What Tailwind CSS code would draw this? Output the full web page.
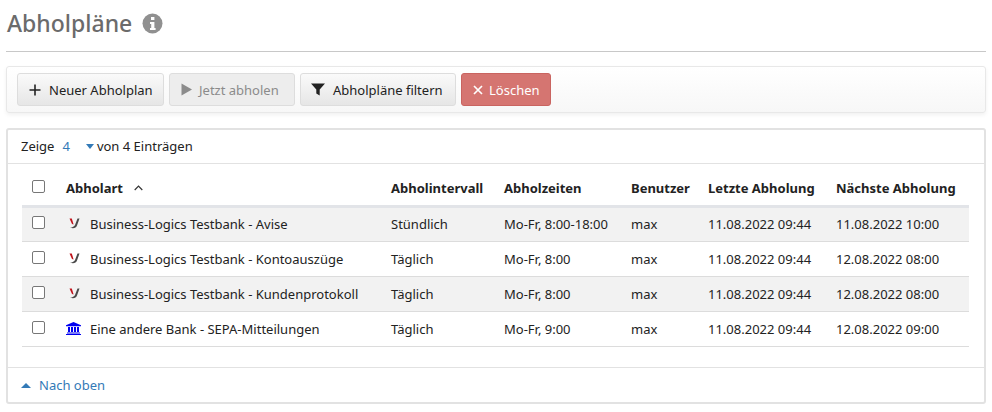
<!DOCTYPE html>
<html lang="de">
<head>
    <meta charset="UTF-8">
    <title>Abholpläne</title>
    <script src="https://cdn.jsdelivr.net/npm/@tailwindcss/browser@4"></script>
</head>
<body class="bg-white font-['Noto_Sans',sans-serif] text-[13px] text-[#222] h-[412px] overflow-hidden">
    <div class="px-[6px] pt-[6px]">
        <!-- Title -->
        <div class="flex items-center h-[46px] border-b border-[#c8c8c8] pl-px pb-[11px]">
            <h1 class="text-[23px] font-medium text-[#6b6b6b] leading-none">Abholpläne</h1>
            <svg class="ml-[10px] w-[21px] h-[21px]" viewBox="0 0 21 21">
                <circle cx="10.5" cy="10.5" r="10" fill="#909090"/>
                <rect x="9" y="4" width="3.4" height="3" fill="#fff"/>
                <path d="M8 9h4.4v6h1.2v2H8v-2h1.2v-4H8z" fill="#fff"/>
            </svg>
        </div>

        <!-- Toolbar -->
        <div class="mt-[14px] h-[47px] flex items-center gap-[5px] pl-[10px] border border-[#e8e8e8] rounded-[3px] bg-gradient-to-b from-white to-[#f7f7f7] shadow-[0_2px_4px_rgba(0,0,0,0.06)]">
            <button class="h-[33px] w-[147px] flex items-center pl-[11px] pt-[2px] rounded-[3px] border border-[#dddddd] bg-gradient-to-b from-[#fafafa] to-[#e6e6e6] text-[#222]">
                <svg class="w-[12px] h-[12px] mr-[8px] -mt-[2px]" viewBox="0 0 12 12"><path d="M6 0.5v11M0.5 6h11" stroke="#222" stroke-width="1.6" fill="none"/></svg>
                Neuer Abholplan
            </button>
            <button class="h-[33px] w-[126px] flex items-center pl-[11px] pt-[2px] rounded-[3px] border border-[#dddddd] bg-[#ededed] text-[#8b8b8b]">
                <svg class="w-[11px] h-[13px] mr-[7px] -mt-[2px]" viewBox="0 0 11 13"><path d="M0.5 0.5L11 6.5L0.5 12.5z" fill="#8b8b8b"/></svg>
                Jetzt abholen
            </button>
            <button class="h-[33px] w-[156px] flex items-center pl-[10px] pt-[2px] rounded-[3px] border border-[#dddddd] bg-gradient-to-b from-[#fafafa] to-[#e6e6e6] text-[#222]">
                <svg class="w-[14px] h-[13px] mr-[8px] -mt-[2px]" viewBox="0 0 14 13"><path d="M0 0.5h14L8.7 6.5v6L5.3 10.5v-4z" fill="#222"/></svg>
                Abholpläne filtern
            </button>
            <button class="h-[33px] w-[90px] flex items-center pl-[11px] pt-[2px] rounded-[3px] border border-[#c96460] bg-[#d57571] text-white">
                <svg class="w-[10px] h-[10px] mr-[6px] -mt-[2px]" viewBox="0 0 10 10"><path d="M1 1l8 8M9 1l-8 8" stroke="#fff" stroke-width="1.7" fill="none"/></svg>
                Löschen
            </button>
        </div>

        <!-- Panel -->
        <div class="mt-[15px] h-[276px] border-2 border-[#e2e2e2] rounded-[3px] flex flex-col">
            <div class="h-[34px] flex items-center pl-[13px] border-b border-[#e2e2e2] shrink-0">
                <span>Zeige</span>
                <span class="ml-[8px] text-[#337ab7]">4</span>
                <span class="ml-[16px] mr-[3px] w-0 h-0 border-x-[4px] border-x-transparent border-t-[5px] border-t-[#337ab7]"></span>
                <span>von 4 Einträgen</span>
            </div>
            <div class="flex-1 px-[14px]">
                <table class="table-fixed w-[947px] border-collapse">
                    <colgroup>
                        <col class="w-[34px]"><col class="w-[325px]"><col class="w-[114px]"><col class="w-[126px]"><col class="w-[77px]"><col class="w-[129px]"><col class="w-[142px]">
                    </colgroup>
                    <thead>
                        <tr class="h-[42px] border-b-[3px] border-[#e2e4e8] text-left font-bold">
                            <th class="pl-[10px]"><span class="block w-[13px] h-[13px] border border-[#777] rounded-[2px] bg-white mt-[4px]"></span></th>
                            <th class="pl-[10px] pt-[8px]">
                                <span class="flex items-center">Abholart
                                    <svg class="ml-[11px] w-[9px] h-[6px]" viewBox="0 0 9 6"><path d="M0.7 5L4.5 1.2L8.3 5" stroke="#333" stroke-width="1.2" fill="none"/></svg>
                                </span>
                            </th>
                            <th class="pl-[10px] pt-[8px]">Abholintervall</th>
                            <th class="pl-[9px] pt-[8px]">Abholzeiten</th>
                            <th class="pl-[10px] pt-[8px]">Benutzer</th>
                            <th class="pl-[10px] pt-[8px]">Letzte Abholung</th>
                            <th class="pl-[9px] pt-[8px]">Nächste Abholung</th>
                        </tr>
                    </thead>
                    <tbody>
                        <tr class="h-[35px] bg-[#f2f2f2] border-b border-[#dcdcdc]">
                            <td class="pl-[10px]"><span class="block w-[13px] h-[13px] border border-[#777] rounded-[2px] bg-white -mt-[3px]"></span></td>
                            <td class="pl-[12px] pt-[2px]">
                                <span class="flex items-center">
                                    <svg class="w-[12px] h-[12px] mr-[10px] -mt-[2px]" viewBox="0 0 12 12"><path d="M1.5 0.5L3.8 0.5L5.6 6.5L4 6z" fill="#c0141c"/><path d="M11.5 0.5L9.5 0.5L7 7C6.3 8.5 4.5 9.6 2 9.6C5.5 11.2 8 10 9 7.5z" fill="#4a4a4a"/></svg>
                                    Business-Logics Testbank - Avise
                                </span>
                            </td>
                            <td class="pl-[10px] pt-[2px]">Stündlich</td>
                            <td class="pl-[9px] pt-[2px]">Mo-Fr, 8:00-18:00</td>
                            <td class="pl-[10px] pt-[2px]">max</td>
                            <td class="pl-[10px] pt-[2px]">11.08.2022 09:44</td>
                            <td class="pl-[9px] pt-[2px]">11.08.2022 10:00</td>
                        </tr>
                        <tr class="h-[35px] border-b border-[#dcdcdc]">
                            <td class="pl-[10px]"><span class="block w-[13px] h-[13px] border border-[#777] rounded-[2px] bg-white -mt-[3px]"></span></td>
                            <td class="pl-[12px] pt-[2px]">
                                <span class="flex items-center">
                                    <svg class="w-[12px] h-[12px] mr-[10px] -mt-[2px]" viewBox="0 0 12 12"><path d="M1.5 0.5L3.8 0.5L5.6 6.5L4 6z" fill="#c0141c"/><path d="M11.5 0.5L9.5 0.5L7 7C6.3 8.5 4.5 9.6 2 9.6C5.5 11.2 8 10 9 7.5z" fill="#4a4a4a"/></svg>
                                    Business-Logics Testbank - Kontoauszüge
                                </span>
                            </td>
                            <td class="pl-[10px] pt-[2px]">Täglich</td>
                            <td class="pl-[9px] pt-[2px]">Mo-Fr, 8:00</td>
                            <td class="pl-[10px] pt-[2px]">max</td>
                            <td class="pl-[10px] pt-[2px]">11.08.2022 09:44</td>
                            <td class="pl-[9px] pt-[2px]">12.08.2022 08:00</td>
                        </tr>
                        <tr class="h-[35px] bg-[#f2f2f2] border-b border-[#dcdcdc]">
                            <td class="pl-[10px]"><span class="block w-[13px] h-[13px] border border-[#777] rounded-[2px] bg-white -mt-[3px]"></span></td>
                            <td class="pl-[12px] pt-[2px]">
                                <span class="flex items-center">
                                    <svg class="w-[12px] h-[12px] mr-[10px] -mt-[2px]" viewBox="0 0 12 12"><path d="M1.5 0.5L3.8 0.5L5.6 6.5L4 6z" fill="#c0141c"/><path d="M11.5 0.5L9.5 0.5L7 7C6.3 8.5 4.5 9.6 2 9.6C5.5 11.2 8 10 9 7.5z" fill="#4a4a4a"/></svg>
                                    Business-Logics Testbank - Kundenprotokoll
                                </span>
                            </td>
                            <td class="pl-[10px] pt-[2px]">Täglich</td>
                            <td class="pl-[9px] pt-[2px]">Mo-Fr, 8:00</td>
                            <td class="pl-[10px] pt-[2px]">max</td>
                            <td class="pl-[10px] pt-[2px]">11.08.2022 09:44</td>
                            <td class="pl-[9px] pt-[2px]">12.08.2022 08:00</td>
                        </tr>
                        <tr class="h-[35px] border-b border-[#dcdcdc]">
                            <td class="pl-[10px]"><span class="block w-[13px] h-[13px] border border-[#777] rounded-[2px] bg-white -mt-[3px]"></span></td>
                            <td class="pl-[10px] pt-[2px]">
                                <span class="flex items-center">
                                    <svg class="w-[15px] h-[13px] mr-[9px] -mt-[2px]" viewBox="0 0 15 13"><path d="M7.5 0L15 3.2V4.2H0V3.2z" fill="#0000f0"/><path d="M2 5h2v5H2zM5 5h2v5H5zM8 5h2v5H8zM11 5h2v5h-2zM1 10.5h13V11.5H1zM0 12h15v1H0z" fill="#0000f0"/></svg>
                                    Eine andere Bank - SEPA-Mitteilungen
                                </span>
                            </td>
                            <td class="pl-[10px] pt-[2px]">Täglich</td>
                            <td class="pl-[9px] pt-[2px]">Mo-Fr, 9:00</td>
                            <td class="pl-[10px] pt-[2px]">max</td>
                            <td class="pl-[10px] pt-[2px]">11.08.2022 09:44</td>
                            <td class="pl-[9px] pt-[2px]">12.08.2022 09:00</td>
                        </tr>
                    </tbody>
                </table>
            </div>
            <div class="h-[35px] flex items-center pl-[13px] pt-px border-t border-[#e2e2e2] text-[#337ab7] shrink-0">
                <span class="mr-[8px] w-0 h-0 border-x-[5px] border-x-transparent border-b-[5px] border-b-[#337ab7]"></span>
                Nach oben
            </div>
        </div>
    </div>
</body>
</html>
